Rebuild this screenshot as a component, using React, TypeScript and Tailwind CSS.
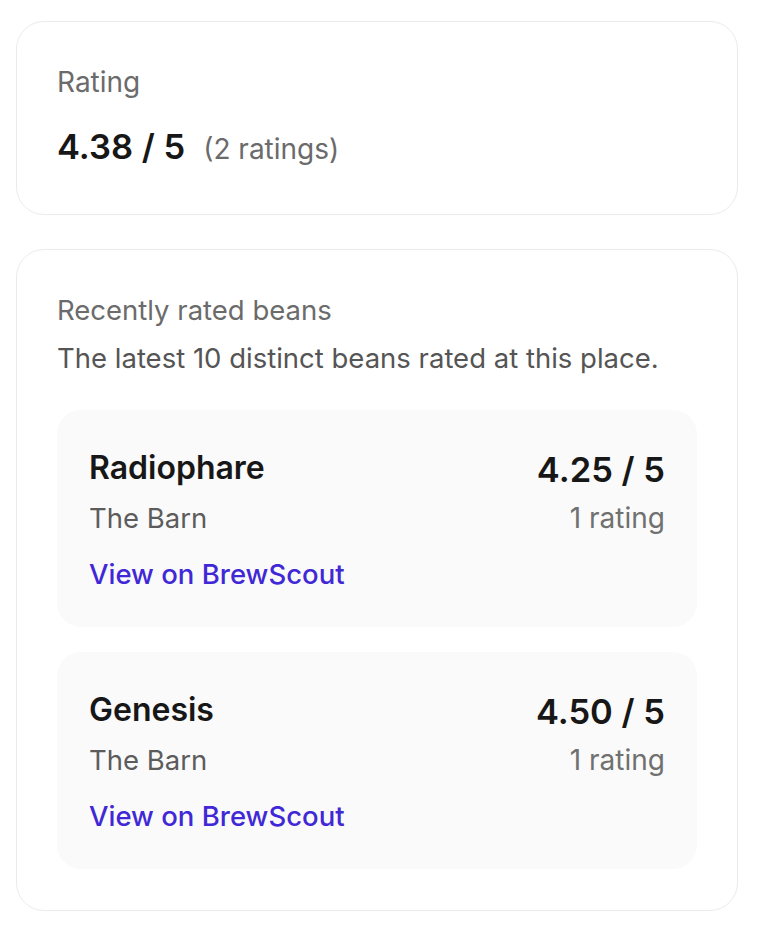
import React from "react";

type Bean = {
  id: string;
  name: string;
  roaster: string;
  score: string;
  count: number;
};

const beans: Bean[] = [
  { id: "radiophare", name: "Radiophare", roaster: "The Barn", score: "4.25", count: 1 },
  { id: "genesis", name: "Genesis", roaster: "The Barn", score: "4.50", count: 1 },
];

function BeanRow({ bean }: { bean: Bean }) {
  return (
    <div className="flex justify-between rounded-[24px] bg-[#fafafa] px-8 pt-[38px] pb-[35px]">
      <div className="flex flex-col">
        <h3 className="text-[32px] leading-[40px] font-semibold text-[#171717]">{bean.name}</h3>
        <p className="mt-[12px] text-[27.5px] leading-[36px] text-[#5c5c5c]">{bean.roaster}</p>
        <a href="#" className="mt-[20px] text-[27.5px] leading-[36px] font-medium text-[#4128d6]">
          View on BrewScout
        </a>
      </div>
      <div className="flex flex-col items-end">
        <span className="text-[34.5px] leading-[44px] font-semibold text-[#171717]">{bean.score} / 5</span>
        <span className="mt-[8px] text-[28px] leading-[36px] text-[#707070]">
          {bean.count} {bean.count === 1 ? "rating" : "ratings"}
        </span>
      </div>
    </div>
  );
}

export default function App() {
  return (
    <div className="min-h-screen bg-white px-4 pt-[21px] font-['Inter',sans-serif]">
      <div className="flex w-[722px] flex-col gap-[34px]">
        {/* overall rating */}
        <section className="rounded-[28px] border border-[#ebebeb] bg-white px-10 pt-[42px] pb-[44px]">
          <p className="text-[28px] leading-[36px] text-[#6b6b6b]">Rating</p>
          <div className="mt-[25px] flex items-baseline gap-[18px]">
            <span className="text-[34.5px] leading-[44px] font-semibold text-[#171717]">4.38 / 5</span>
            <span className="text-[28px] text-[#6b6b6b]">(2 ratings)</span>
          </div>
        </section>

        {/* recent beans */}
        <section className="rounded-[28px] border border-[#ebebeb] bg-white px-10 pt-[42px] pb-[41px]">
          <p className="text-[27.5px] leading-[36px] text-[#6b6b6b]">Recently rated beans</p>
          <p className="mt-[12px] text-[27.5px] leading-[36px] text-[#555555]">
            The latest 10 distinct beans rated at this place.
          </p>
          <div className="mt-[34px] flex flex-col gap-[25px]">
            {beans.map((bean) => (
              <BeanRow key={bean.id} bean={bean} />
            ))}
          </div>
        </section>
      </div>
    </div>
  );
}
